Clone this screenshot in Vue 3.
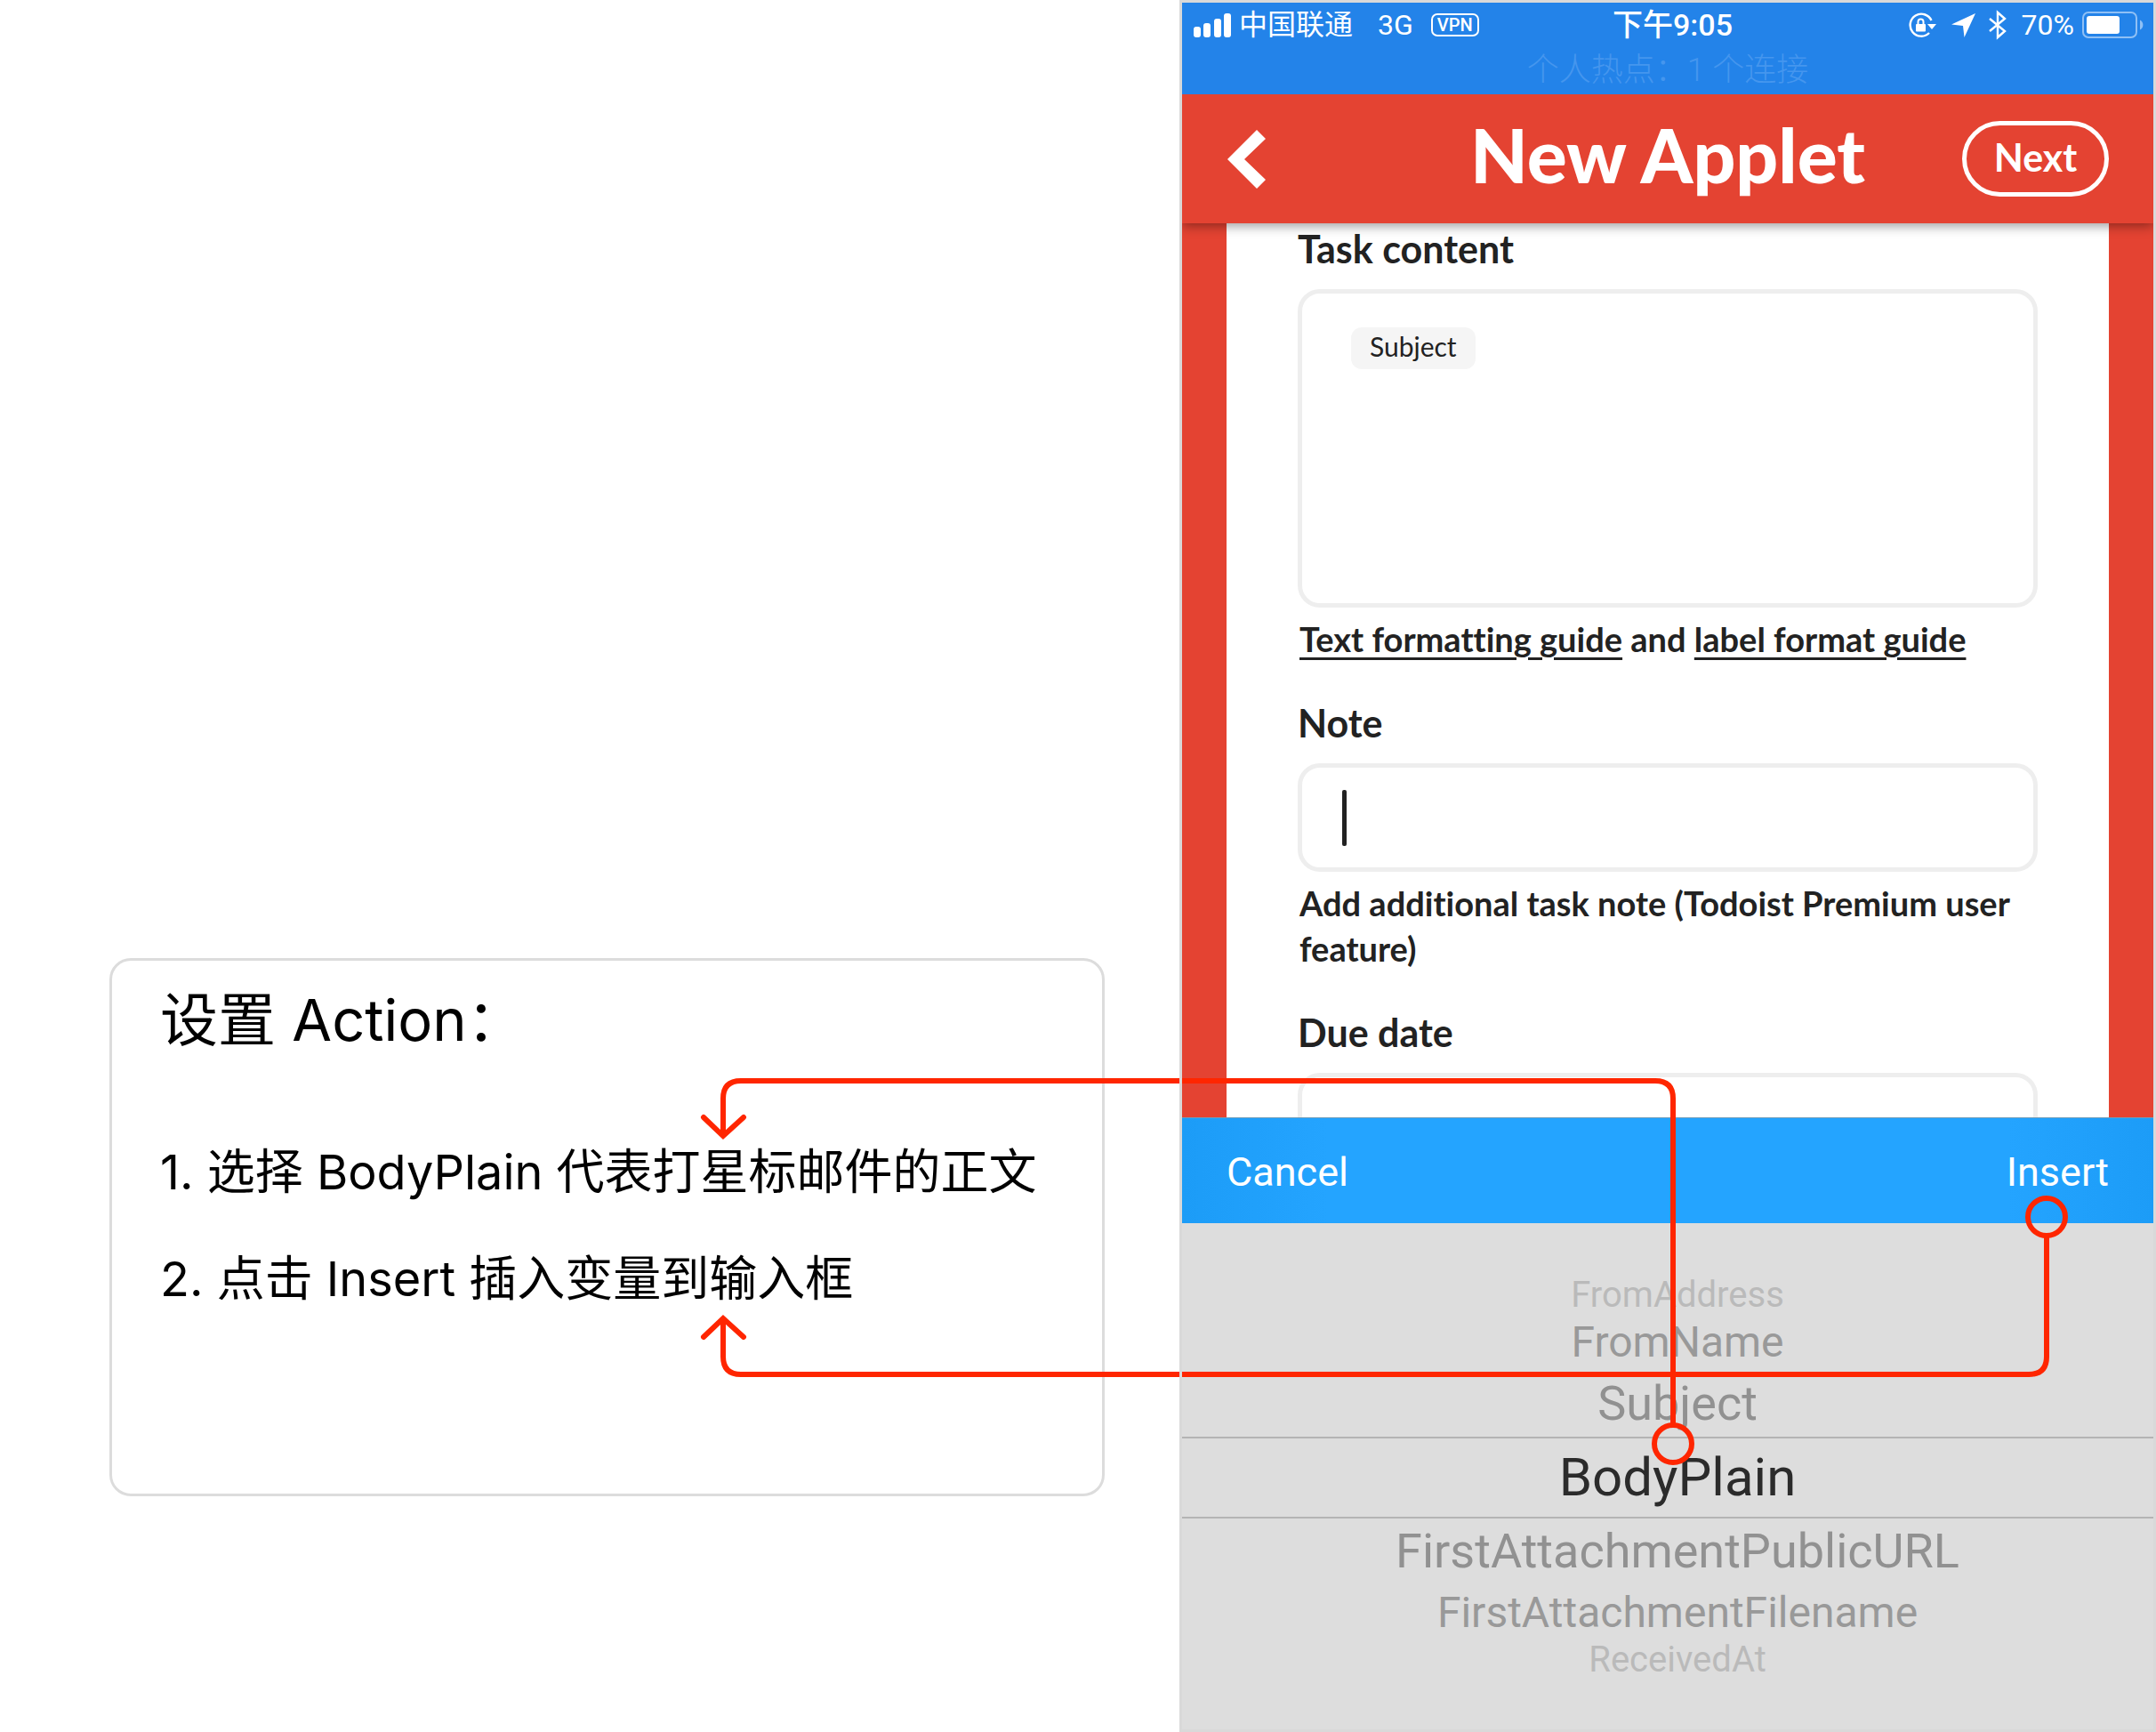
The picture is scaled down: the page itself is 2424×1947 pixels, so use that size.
<template>
  <div class="page">
    <section class="guide">
      <div class="note-card">
        <h2 class="note-title">设置 Action：</h2>
        <p v-for="(step, i) in steps" :key="step" class="note-step">{{ i + 1 }}. {{ step }}</p>
      </div>
    </section>

    <main class="phone">
      <div class="status-bar">
        <div class="status-row">
          <div class="status-left">
            <svg class="signal" width="42" height="27" viewBox="0 0 42 27" fill="#fff">
              <rect x="0" y="15" width="8" height="12" rx="3" />
              <rect x="11" y="11" width="8" height="16" rx="3" />
              <rect x="23" y="6" width="8" height="21" rx="3" />
              <rect x="34" y="0" width="8" height="27" rx="3" />
            </svg>
            <span class="carrier">中国联通</span>
            <span class="network">3G</span>
            <span class="vpn">VPN</span>
          </div>
          <span class="time">下午9:05</span>
          <div class="status-right">
            <svg width="31" height="28" viewBox="0 0 31 28" fill="none">
              <path d="M25.500 9A12.500 12.500 0 1 0 23 23" stroke="#fff" stroke-width="2.400" />
              <path d="M21 13h10l-5 6z" fill="#fff" />
              <rect x="8" y="13" width="11" height="8.500" rx="1" fill="#fff" />
              <path d="M10.500 13.500v-3a3 3 0 0 1 6 0v3" stroke="#fff" stroke-width="2" />
            </svg>
            <svg class="location" width="27" height="27" viewBox="0 0 27 27" fill="#fff">
              <path d="M27 0L14.500 27L13 14L0 12.500z" />
            </svg>
            <svg class="bluetooth" width="20" height="34" viewBox="0 0 20 34" fill="none" stroke="#fff" stroke-width="2.400">
              <path d="M1 10L18 24L10 31V3L18 10L1 24" />
            </svg>
            <span class="percent">70%</span>
            <svg class="battery" width="70" height="30" viewBox="0 0 70 30" fill="none">
              <rect x="1" y="1" width="60" height="28" rx="6" stroke="#8fc0f5" stroke-width="2" />
              <rect x="5" y="5" width="37" height="20" rx="3" fill="#fff" />
              <path d="M65 9.500c4.500 2 4.500 9 0 11z" fill="#8fc0f5" />
            </svg>
          </div>
        </div>
        <div class="hotspot">个人热点：1 个连接</div>
      </div>

      <header class="app-header">
        <button class="back" aria-label="Back">
          <svg width="44" height="66" viewBox="0 0 44 66" fill="#fff">
            <path d="M34 0L44 10L20 33L44 56L34 66L1 33z" />
          </svg>
        </button>
        <h1 class="app-title">New Applet</h1>
        <button class="next">Next</button>
      </header>

      <div class="form-area">
        <form class="form" @submit.prevent>
          <label for="task" class="label">Task content</label>
          <div class="field field-tall">
            <span class="chip">Subject</span>
            <textarea id="task" v-model="task"></textarea>
          </div>
          <p class="help">
            <a href="#">Text formatting guide</a> and <a href="#">label format guide</a>
          </p>

          <label for="note" class="label">Note</label>
          <div class="field">
            <span class="caret"></span>
            <input id="note" v-model="note" type="text" />
          </div>
          <p class="help">Add additional task note (Todoist Premium user feature)</p>

          <label for="due" class="label">Due date</label>
          <div class="field">
            <input id="due" v-model="due" type="text" />
          </div>
        </form>
      </div>

      <div class="toolbar">
        <button>Cancel</button>
        <button>Insert</button>
      </div>

      <div class="picker" role="listbox" aria-label="Ingredient">
        <button
          v-for="(item, i) in ingredients"
          :key="item"
          class="option"
          :class="'dist-' + Math.abs(i - selected)"
          role="option"
          :aria-selected="i === selected"
          @click="selected = i"
        >{{ item }}</button>
      </div>
    </main>

    <!-- connectors from the steps to the controls -->
    <svg class="connectors" viewBox="0 0 2424 1947" fill="none" stroke="#ff2600" stroke-width="6">
      <path d="M813 1277V1235Q813 1215 833 1215H1861Q1881 1215 1881 1235V1602" />
      <path d="M791 1256L813 1277L836 1256" stroke-linecap="round" />
      <circle cx="1881" cy="1623" r="21" />
      <path d="M813 1482V1525Q813 1545 833 1545H2281Q2301 1545 2301 1525V1389" />
      <path d="M791 1503L813 1482L836 1503" stroke-linecap="round" />
      <circle cx="2301" cy="1368" r="21" />
    </svg>
  </div>
</template>

<script setup>
import { ref } from 'vue';

const steps = [
  '选择 BodyPlain 代表打星标邮件的正文',
  '点击 Insert 插入变量到输入框'
];

const ingredients = [
  'FromAddress',
  'FromName',
  'Subject',
  'BodyPlain',
  'FirstAttachmentPublicURL',
  'FirstAttachmentFilename',
  'ReceivedAt'
];

const selected = ref(3);
const task = ref('');
const note = ref('');
const due = ref('');
</script>

<style>
body {
  margin: 0;
  background: #fff;
}
</style>

<style scoped>
.page {
  position: relative;
  display: grid;
  grid-template-columns: 1326fr 1098fr;
  height: 100vh;
  overflow: hidden;
}

.page * {
  box-sizing: border-box;
}

button {
  border: none;
  padding: 0;
  background: transparent;
  color: #fff;
  cursor: pointer;
}

h1, h2, p {
  margin: 0;
  font-weight: 400;
}

.guide {
  display: flex;
  flex-direction: column;
  justify-content: flex-end;
  padding: 0 84px 265px 123px;
}

.note-card {
  min-height: 605px;
  padding: 22px 54px;
  border: 3px solid #dcdcdc;
  border-radius: 24px;
  color: #000;
  font-family: Inter, "Noto Sans CJK SC", sans-serif;
}

.note-title {
  margin-bottom: 66px;
  font-size: 65px;
  line-height: 90px;
}

.note-step {
  font-size: 54px;
  line-height: 120px;
}

.phone {
  display: flex;
  flex-direction: column;
  min-width: 0;
  height: 100vh;
  padding: 3px;
  font-family: Roboto, "Noto Sans CJK SC", sans-serif;
}

/* frame line stays above the connectors */
.phone::after {
  content: "";
  position: absolute;
  inset: 0 0 0 auto;
  box-sizing: border-box;
  width: calc(100% * 1098 / 2424);
  border: 3px solid #d9d9d9;
  z-index: 4;
  pointer-events: none;
}

.status-bar {
  flex: none;
  height: 103px;
  background: #2383e9;
  color: #fff;
}

.status-row {
  display: grid;
  grid-template-columns: 1fr auto 1fr;
  align-items: center;
  height: 50px;
  padding: 0 10px 0 13px;
  font-size: 32px;
  line-height: 50px;
}

.status-left,
.status-right {
  display: flex;
  align-items: center;
}

.status-right {
  justify-content: flex-end;
}

.carrier {
  margin-left: 9px;
}

.network {
  margin-left: 28px;
}

.vpn {
  margin-left: 20px;
  padding: 0 5px;
  border: 2px solid #fff;
  border-radius: 7px;
  font-size: 20px;
  font-weight: 500;
  line-height: 22px;
}

.time {
  padding-left: 8px;
  font-size: 34px;
  font-weight: 500;
}

.location {
  margin-left: 17px;
}

.bluetooth {
  margin-left: 15px;
}

.percent {
  margin-left: 17px;
}

.battery {
  margin-left: 9px;
}

.hotspot {
  color: #4596ee;
  font-size: 36px;
  font-weight: 300;
  line-height: 52px;
  text-align: center;
}

.app-header {
  position: relative;
  z-index: 1;
  flex: none;
  display: grid;
  grid-template-columns: 1fr auto 1fr;
  align-items: center;
  height: 145px;
  padding: 0 50px;
  background: #e44332;
  box-shadow: 0 3px 12px rgba(0, 0, 0, 0.4);
  clip-path: inset(0 0 -20px 0);
  color: #fff;
  font-family: Lato, sans-serif;
}

.back {
  justify-self: start;
  display: flex;
}

.app-title {
  padding-bottom: 10px;
  font-size: 84px;
  font-weight: 900;
  line-height: 92px;
}

.next {
  justify-self: end;
  width: 165px;
  height: 85px;
  padding-bottom: 4px;
  border: 5px solid #fff;
  border-radius: 43px;
  font-family: Lato, sans-serif;
  font-size: 43px;
  font-weight: 700;
}

.form-area {
  flex: 1;
  min-height: 0;
  overflow: hidden;
  padding: 0 50px;
  background: #e44332;
}

.form {
  padding: 4px 80px 40px;
  background: #fff;
  color: #222;
  font-family: Lato, sans-serif;
  font-variant-ligatures: none;
}

.label {
  display: block;
  margin-bottom: 20px;
  font-size: 43px;
  font-weight: 700;
  line-height: 50px;
}

.field {
  display: flex;
  align-items: center;
  height: 122px;
  padding: 0 45px;
  border: 5px solid #eee;
  border-radius: 25px;
  background: #fff;
}

.field-tall {
  align-items: flex-start;
  height: 358px;
  padding: 38px 55px;
}

.field input,
.field textarea {
  flex: 1;
  min-width: 0;
  height: 100%;
  padding: 0;
  border: none;
  outline: none;
  resize: none;
  background: transparent;
  font: 41px Lato, sans-serif;
}

.chip {
  padding: 0 21px 4px;
  border-radius: 12px;
  background: #f5f5f5;
  font-size: 30px;
  line-height: 43px;
}

.caret {
  width: 5px;
  height: 63px;
  border-radius: 2px;
  background: #222;
}

.help {
  margin: 10px 0 44px;
  padding-left: 2px;
  font-size: 38px;
  font-weight: 700;
  line-height: 51px;
}

.help a {
  color: inherit;
  text-decoration: underline;
  text-decoration-thickness: 3px;
  text-underline-offset: 6px;
}

.toolbar {
  flex: none;
  display: flex;
  justify-content: space-between;
  align-items: center;
  height: 119px;
  padding: 2px 50px 0;
  border-top: 1px solid #6f9dba;
  background: linear-gradient(90deg, #1c9cf7, #24a4ff 15%, #24a4ff 85%, #1c9cf7);
}

.toolbar button {
  font-family: Roboto, sans-serif;
  font-size: 45px;
}

.picker {
  flex: none;
  display: flex;
  flex-direction: column;
  padding: 60px 0 57px;
  background: #ddd;
}

.option {
  padding-left: 22px;
  font-family: Roboto, sans-serif;
  white-space: nowrap;
}

.dist-0 {
  border-top: 2px solid #b4b4b4;
  border-bottom: 2px solid #b4b4b4;
  color: #2b2b2b;
  font-size: 60px;
  line-height: 88px;
}

.dist-1 {
  color: #919191;
  font-size: 54px;
  line-height: 74px;
}

.dist-2 {
  color: #999;
  font-size: 48px;
  line-height: 64px;
}

.dist-3 {
  color: #bababa;
  font-size: 40px;
  line-height: 42px;
}

.connectors {
  position: absolute;
  top: 0;
  left: 0;
  width: 100%;
  height: auto;
  z-index: 3;
  pointer-events: none;
}
</style>
